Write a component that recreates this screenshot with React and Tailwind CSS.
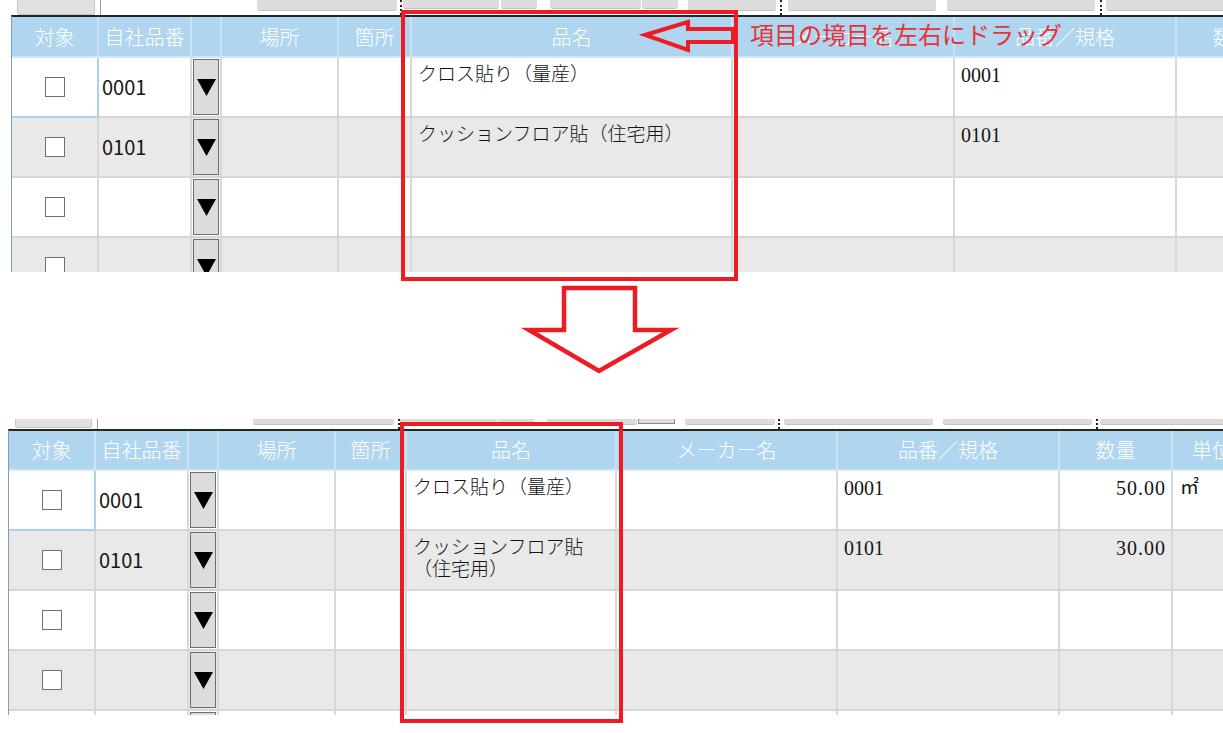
import React from "react";

const SANS = "font-['Noto_Sans_CJK_JP','Noto_Sans',sans-serif]";
const SERIF = "font-['Liberation_Serif','Noto_Sans_CJK_JP',serif]";

// toolbar strips (only their lower edge is visible in the screenshot)
const topStrip = [
  "ml-[17px] w-[78px] h-[15px] bg-[#e1e1e1] border border-t-0 border-[#c6c6c6] rounded-b-[3px]",
  "ml-[5px] w-[1px] h-[15px] bg-[#9a9a9a]",
  "ml-[156px] w-[140px] h-[11px] bg-[#dcdcdc] border-b border-[#c4c4c4] rounded-b-[3px]",
  "ml-[3px] h-[15px] border-l-2 border-dotted border-[#222]",
  "ml-[1px] w-[96px] h-[9px] bg-[#dcdcdc] border-b border-[#c4c4c4] rounded-b-[3px]",
  "ml-[2px] w-[36px] h-[9px] bg-[#dcdcdc] border-b border-[#c4c4c4] rounded-b-[3px]",
  "ml-[13px] w-[91px] h-[9px] bg-[#dcdcdc] border-b border-[#c4c4c4] rounded-b-[3px]",
  "ml-[1px] w-[36px] h-[9px] bg-[#dcdcdc] border-b border-[#c4c4c4] rounded-b-[3px]",
  "ml-[10px] w-[88px] h-[11px] bg-[#dcdcdc] border-b border-[#c4c4c4] rounded-b-[3px]",
  "ml-[4px] h-[15px] border-l-2 border-dotted border-[#222]",
  "ml-[6px] w-[148px] h-[11px] bg-[#dcdcdc] border-b border-[#c4c4c4] rounded-b-[3px]",
  "ml-[11px] w-[148px] h-[11px] bg-[#dcdcdc] border-b border-[#c4c4c4] rounded-b-[3px]",
  "ml-[5px] h-[15px] border-l-2 border-dotted border-[#222]",
  "ml-[4px] w-[130px] h-[11px] bg-[#dcdcdc] border-b border-[#c4c4c4] rounded-b-[3px]",
];

const bottomStrip = [
  "ml-[15px] w-[77px] h-[9px] bg-[#e1e1e1] border border-t-0 border-[#c6c6c6] rounded-b-[3px]",
  "ml-[5px] w-[1px] h-[10px] bg-[#9a9a9a]",
  "ml-[155px] w-[141px] h-[6px] bg-[#dcdcdc] border-b border-[#c4c4c4] rounded-b-[3px]",
  "ml-[4px] h-[10px] border-l-2 border-dotted border-[#222]",
  "ml-[0px] w-[97px] h-[6px] bg-[#dcdcdc] border-b border-[#c4c4c4] rounded-b-[3px]",
  "ml-[1px] w-[36px] h-[6px] bg-[#dcdcdc] border-b border-[#c4c4c4] rounded-b-[3px]",
  "ml-[13px] w-[90px] h-[6px] bg-[#dcdcdc] border-b border-[#c4c4c4] rounded-b-[3px]",
  "ml-[1px] w-[37px] h-[5px] bg-[#dcdcdc] border border-t-0 border-[#8a8a8a]",
  "ml-[10px] w-[90px] h-[6px] bg-[#dcdcdc] border-b border-[#c4c4c4] rounded-b-[3px]",
  "ml-[3px] h-[10px] border-l-2 border-dotted border-[#222]",
  "ml-[4px] w-[149px] h-[6px] bg-[#dcdcdc] border-b border-[#c4c4c4] rounded-b-[3px]",
  "ml-[10px] w-[149px] h-[6px] bg-[#dcdcdc] border-b border-[#c4c4c4] rounded-b-[3px]",
  "ml-[4px] h-[10px] border-l-2 border-dotted border-[#222]",
  "ml-[2px] w-[130px] h-[6px] bg-[#dcdcdc] border-b border-[#c4c4c4] rounded-b-[3px]",
];

const topCols = [
  { key: "check", label: "対象", w: "w-[87px]" },
  { key: "code", label: "自社品番", w: "w-[93px]" },
  { key: "dd", label: "", w: "w-[30px]" },
  { key: "place", label: "場所", w: "w-[117px]" },
  { key: "spot", label: "箇所", w: "w-[73px]" },
  { key: "name", label: "品名", w: "w-[321px]" },
  { key: "maker", label: "メーカー名", w: "w-[222px]" },
  { key: "spec", label: "品番／規格", w: "w-[222px]" },
  { key: "qty", label: "数量", w: "w-[113px]" },
  { key: "unit", label: "単位", w: "w-[80px]" },
];

const bottomCols = [
  { key: "check", label: "対象", w: "w-[87px]" },
  { key: "code", label: "自社品番", w: "w-[93px]" },
  { key: "dd", label: "", w: "w-[30px]" },
  { key: "place", label: "場所", w: "w-[117px]" },
  { key: "spot", label: "箇所", w: "w-[71px]" },
  { key: "name", label: "品名", w: "w-[210px]" },
  { key: "maker", label: "メーカー名", w: "w-[221px]" },
  { key: "spec", label: "品番／規格", w: "w-[222px]" },
  { key: "qty", label: "数量", w: "w-[113px]" },
  { key: "unit", label: "単位", w: "w-[80px]" },
];

const rows = [
  { code: "0001", name: "クロス貼り（量産）", spec: "0001", qty: "50.00", unit: "㎡" },
  { code: "0101", name: "クッションフロア貼（住宅用）", spec: "0101", qty: "30.00", unit: "" },
  {},
  {},
  {},
];

function Strip({ items, h }) {
  return (
    <div className={`flex items-start overflow-hidden ${h}`}>
      {items.map((cls, i) => (
        <div key={i} className={`shrink-0 ${cls}`} />
      ))}
    </div>
  );
}

function DropButton() {
  return (
    <div className="h-full w-full p-[1px]">
      <div className="h-full w-full bg-[#dcdcdc] border border-[#6e6e6e] flex items-center justify-center">
        <svg width="19" height="17" viewBox="0 0 19 17">
          <polygon points="0,0 19,0 9.5,17" fill="#000" />
        </svg>
      </div>
    </div>
  );
}

function Cell({ col, row, first, showQty }) {
  const edge =
    first && col.key === "check"
      ? "border-r-[#a9d3e8] border-b-[#a9d3e8]"
      : "border-r-[#d8d8d8] border-b-[#d6d6d6]";
  const base = `shrink-0 h-full border-r-2 border-b-2 ${edge} ${col.w}`;
  if (col.key === "check")
    return (
      <div className={`${base} flex items-center justify-center`}>
        <div className="w-[20px] h-[20px] bg-white border-[1.5px] border-[#6f6f6f]" />
      </div>
    );
  if (col.key === "dd")
    return (
      <div className={base}>
        <DropButton />
      </div>
    );
  if (col.key === "code")
    return (
      <div className={`${base} flex items-center pl-[3px] text-[20px] text-[#151515] ${SANS}`}>
        {row.code}
      </div>
    );
  if (col.key === "name")
    return (
      <div className={`${base} pt-[6px] pl-[6px] pr-[8px] text-[19px] leading-[22px] font-light text-[#151515] ${SERIF}`}>
        {row.name}
      </div>
    );
  if (col.key === "spec")
    return (
      <div className={`${base} pt-[6px] pl-[6px] text-[20px] leading-[22px] text-[#151515] ${SERIF}`}>
        {row.spec}
      </div>
    );
  if (col.key === "qty")
    return (
      <div className={`${base} pt-[6px] pr-[5px] text-right text-[20px] leading-[22px] tracking-[1px] text-[#151515] ${SERIF}`}>
        {showQty ? row.qty : ""}
      </div>
    );
  if (col.key === "unit")
    return (
      <div className={`${base} pt-[6px] pl-[7px] text-[19px] leading-[22px] text-[#151515] ${SERIF}`}>
        {showQty ? row.unit : ""}
      </div>
    );
  return <div className={base} />;
}

function Grid({ cols, ml, headH, showQty }) {
  return (
    <div className={`${ml} border-l border-[#7d9dc6] border-t-2 border-t-[#262626] w-[1400px]`}>
      <div className={`flex ${headH} bg-[#b0d5ee] border-b-2 border-[#d2e5f2]`}>
        {cols.map((c) => (
          <div
            key={c.key}
            className={`shrink-0 h-full ${c.w} border-r-2 border-[#cce2f2] flex items-center justify-center text-[20px] font-light text-white ${SANS}`}
          >
            {c.label}
          </div>
        ))}
      </div>
      {rows.map((r, i) => (
        <div key={i} className={`flex h-[60px] ${i % 2 ? "bg-[#e9e9e9]" : "bg-white"}`}>
          {cols.map((c) => (
            <Cell key={c.key} col={c} row={r} first={i === 0} showQty={showQty} />
          ))}
        </div>
      ))}
    </div>
  );
}

export default function App() {
  return (
    <div className="relative w-[1223px] h-[733px] overflow-hidden bg-white">
      <div className="h-[272px] overflow-hidden">
        <Strip items={topStrip} h="h-[15px]" />
        <Grid cols={topCols} ml="ml-[11px]" headH="h-[41px]" showQty={false} />
      </div>
      <div className="h-[147px]" />
      <div className="h-[296px] overflow-hidden">
        <Strip items={bottomStrip} h="h-[10px]" />
        <Grid cols={bottomCols} ml="ml-[8px]" headH="h-[40px]" showQty={true} />
      </div>

      {/* annotations */}
      <div className="absolute left-[401px] top-[10px] w-[337px] h-[271px] border-4 border-[#ed1c24] pointer-events-none" />
      <div className="absolute left-[400px] top-[422px] w-[223px] h-[301px] border-4 border-[#ed1c24] pointer-events-none" />
      <div className={`absolute left-[750px] top-[21px] text-[24px] leading-[26px] text-[#e6323a] whitespace-nowrap ${SANS}`}>
        項目の境目を左右にドラッグ
      </div>
      <svg className="absolute left-0 top-0 pointer-events-none" width="1223" height="733" viewBox="0 0 1223 733">
        <polygon
          points="645,35 688,22 688,29 733,29 733,42 688,42 688,50"
          fill="none"
          stroke="#ed1c24"
          strokeWidth="4"
          strokeLinejoin="miter"
        />
        <polygon
          points="564,288 635,288 635,330 671,330 599,371 529,330 564,330"
          fill="none"
          stroke="#ed1c24"
          strokeWidth="4.5"
          strokeLinejoin="miter"
        />
      </svg>
    </div>
  );
}
